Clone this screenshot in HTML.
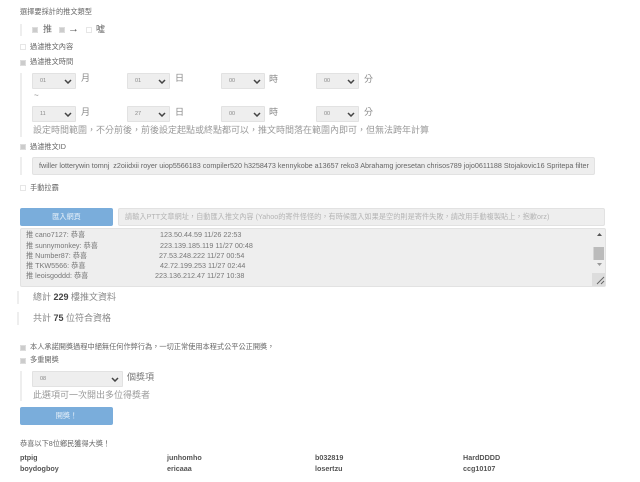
<!DOCTYPE html>
<html lang="zh-Hant"><head><meta charset="utf-8"><title>抽獎</title>
<style>
html,body{margin:0;padding:0;background:#fff}
body{width:640px;height:482px;position:relative;overflow:hidden;font-family:"Liberation Sans","Noto Sans CJK TC",sans-serif;color:#777;filter:blur(.35px)}
.t{position:absolute;white-space:nowrap;line-height:12px;font-size:7.2px;color:#666}
.b{font-size:9px;color:#888}
.bar{position:absolute;background:#eee;width:2px}
.c{position:absolute;width:4px;height:4px;border:1px solid #e6e6e6;background:#fff}
.c.on{background:#ccc;border-color:#ddd}
.s{position:absolute;height:14px;background:#eee;border:1px solid #e2e2e2;border-radius:1px;box-sizing:content-box}
.s span{position:absolute;left:7px;top:1px;font-size:5.5px;line-height:13px;color:#888}
.s svg{position:absolute;right:3px;top:5px}
.btn{position:absolute;background:#7aaddb;border-radius:2px;color:#e6f0f9;text-align:center;font-size:7.2px;line-height:18px;height:18px;width:93px;left:20px}
.inp{position:absolute;background:#eee;border:1px solid #e2e2e2;border-radius:2px;box-sizing:border-box;overflow:hidden;white-space:nowrap;font-size:7.2px}
.n{font-weight:bold;color:#555}
strong{color:#444}
</style></head><body>
<div class="t" style="left:20px;top:6px">選擇要採計的推文類型</div>
<div class="bar" style="left:20px;top:24px;height:12px"></div>
<div class="c on" style="left:32px;top:27px"></div><div class="t b" style="left:43px;top:23px;color:#666">推</div>
<div class="c on" style="left:59px;top:27px"></div><div class="t" style="left:68px;top:23px;font-size:11px;color:#555">→</div>
<div class="c" style="left:86px;top:27px"></div><div class="t b" style="left:96px;top:23px;color:#666">噓</div>
<div class="c" style="left:20px;top:44px"></div><div class="t" style="left:30px;top:41px">過濾推文內容</div>
<div class="c on" style="left:20px;top:60px"></div><div class="t" style="left:30px;top:56px">過濾推文時間</div>
<div class="bar" style="left:20px;top:73px;height:64px"></div>

<div class="s" style="left:32px;top:73px;width:42px"><span>01</span><svg width="8" height="5" viewBox="0 0 8 5"><path d="M1 1l3 3 3-3" fill="none" stroke="#444" stroke-width="1.5"/></svg></div><div class="t b" style="left:81px;top:72px">月</div>
<div class="s" style="left:127px;top:73px;width:41px"><span>01</span><svg width="8" height="5" viewBox="0 0 8 5"><path d="M1 1l3 3 3-3" fill="none" stroke="#444" stroke-width="1.5"/></svg></div><div class="t b" style="left:175px;top:72px">日</div>
<div class="s" style="left:221px;top:73px;width:42px"><span>00</span><svg width="8" height="5" viewBox="0 0 8 5"><path d="M1 1l3 3 3-3" fill="none" stroke="#444" stroke-width="1.5"/></svg></div><div class="t b" style="left:269px;top:73px">時</div>
<div class="s" style="left:316px;top:73px;width:41px"><span>00</span><svg width="8" height="5" viewBox="0 0 8 5"><path d="M1 1l3 3 3-3" fill="none" stroke="#444" stroke-width="1.5"/></svg></div><div class="t b" style="left:364px;top:73px">分</div>
<div class="t" style="left:34px;top:90px;font-size:8px;color:#888">~</div>
<div class="s" style="left:32px;top:106px;width:42px"><span>11</span><svg width="8" height="5" viewBox="0 0 8 5"><path d="M1 1l3 3 3-3" fill="none" stroke="#444" stroke-width="1.5"/></svg></div><div class="t b" style="left:81px;top:106px">月</div>
<div class="s" style="left:127px;top:106px;width:41px"><span>27</span><svg width="8" height="5" viewBox="0 0 8 5"><path d="M1 1l3 3 3-3" fill="none" stroke="#444" stroke-width="1.5"/></svg></div><div class="t b" style="left:175px;top:106px">日</div>
<div class="s" style="left:221px;top:106px;width:42px"><span>00</span><svg width="8" height="5" viewBox="0 0 8 5"><path d="M1 1l3 3 3-3" fill="none" stroke="#444" stroke-width="1.5"/></svg></div><div class="t b" style="left:269px;top:106px">時</div>
<div class="s" style="left:316px;top:106px;width:41px"><span>00</span><svg width="8" height="5" viewBox="0 0 8 5"><path d="M1 1l3 3 3-3" fill="none" stroke="#444" stroke-width="1.5"/></svg></div><div class="t b" style="left:364px;top:106px">分</div>
<div class="t b" style="left:33px;top:124px;color:#999">設定時間範圍，不分前後，前後設定起點或終點都可以，推文時間落在範圍內即可，但無法跨年計算</div>

<div class="c on" style="left:20px;top:144px"></div><div class="t" style="left:30px;top:141px">過濾推文ID</div>
<div class="bar" style="left:20px;top:157px;height:18px"></div>
<div class="inp" style="left:32px;top:157px;width:563px;height:18px;color:#666;line-height:16px;padding:0 6px">fwiller lotterywin tomnj&nbsp; z2oiidxii royer uiop5566183 compiler520 h3258473 kennykobe a13657 reko3 Abrahamg joresetan chrisos789 jojo0611188 Stojakovic16 Spritepa filter</div>
<div class="c" style="left:20px;top:185px"></div><div class="t" style="left:30px;top:182px">手動拉霸</div>

<div class="btn" style="top:208px">匯入網頁</div>
<div class="inp" style="left:118px;top:208px;width:487px;height:18px;color:#b4b4b4;line-height:16px;padding:0 6px">請輸入PTT文章網址，自動匯入推文內容 (Yahoo的寄件怪怪的，有時候匯入如果是空的則是寄件失敗，請改用手動複製貼上，抱歉orz)</div>

<div class="inp" style="left:20px;top:228px;width:586px;height:59px;color:#777"></div>
<div class="t" style="left:26px;top:229px;color:#777">推 cano7127: 恭喜</div><div class="t" style="left:160px;top:229px;color:#777">123.50.44.59 11/26 22:53</div>
<div class="t" style="left:26px;top:240px;color:#777">推 sunnymonkey: 恭喜</div><div class="t" style="left:160px;top:240px;color:#777">223.139.185.119 11/27 00:48</div>
<div class="t" style="left:26px;top:250px;color:#777">推 Number87: 恭喜</div><div class="t" style="left:159px;top:250px;color:#777">27.53.248.222 11/27 00:54</div>
<div class="t" style="left:26px;top:260px;color:#777">推 TKW5566: 恭喜</div><div class="t" style="left:160px;top:260px;color:#777">42.72.199.253 11/27 02:44</div>
<div class="t" style="left:26px;top:270px;color:#777">推 leoisgoddd: 恭喜</div><div class="t" style="left:155px;top:270px;color:#777">223.136.212.47 11/27 10:38</div>
<svg style="position:absolute;left:592px;top:229px" width="14" height="58" viewBox="0 0 14 58">
<path d="M5 7l2.500-3 2.500 3z" fill="#555"/><rect x="1.500" y="18" width="10.500" height="13" fill="#bbb"/><path d="M5 34l2.500 3 2.500-3z" fill="#999"/>
<rect x="0" y="44" width="13" height="13" fill="#ddd"/><path d="M5 55l7-7M9 55l3-3" stroke="#666" stroke-width="1" fill="none"/></svg>

<div class="bar" style="left:17px;top:291px;height:13px"></div>
<div class="t b" style="left:33px;top:291px">總計 <strong>229</strong> 樓推文資料</div>
<div class="bar" style="left:17px;top:312px;height:13px"></div>
<div class="t b" style="left:33px;top:312px">共計 <strong>75</strong> 位符合資格</div>

<div class="c on" style="left:20px;top:345px"></div><div class="t" style="left:30px;top:341px">本人承諾開獎過程中絕無任何作弊行為，一切正常使用本程式公平公正開獎，</div>
<div class="c on" style="left:20px;top:358px"></div><div class="t" style="left:30px;top:354px">多重開獎</div>
<div class="bar" style="left:20px;top:371px;height:30px"></div>
<div class="s" style="left:32px;top:371px;width:89px"><span>08</span><svg width="8" height="5" viewBox="0 0 8 5"><path d="M1 1l3 3 3-3" fill="none" stroke="#444" stroke-width="1.5"/></svg></div>
<div class="t b" style="left:127px;top:371px;color:#777">個獎項</div>
<div class="t b" style="left:33px;top:389px;color:#999">此選項可一次開出多位得獎者</div>
<div class="btn" style="top:407px">開獎！</div>

<div class="t" style="left:20px;top:438px">恭喜以下8位鄉民獲得大獎！</div>
<div class="t n" style="left:20px;top:452px">ptpig</div>
<div class="t n" style="left:167px;top:452px">junhomho</div>
<div class="t n" style="left:315px;top:452px">b032819</div>
<div class="t n" style="left:463px;top:452px">HardDDDD</div>
<div class="t n" style="left:20px;top:463px">boydogboy</div>
<div class="t n" style="left:167px;top:463px">ericaaa</div>
<div class="t n" style="left:315px;top:463px">losertzu</div>
<div class="t n" style="left:463px;top:463px">ccg10107</div>
</body></html>
